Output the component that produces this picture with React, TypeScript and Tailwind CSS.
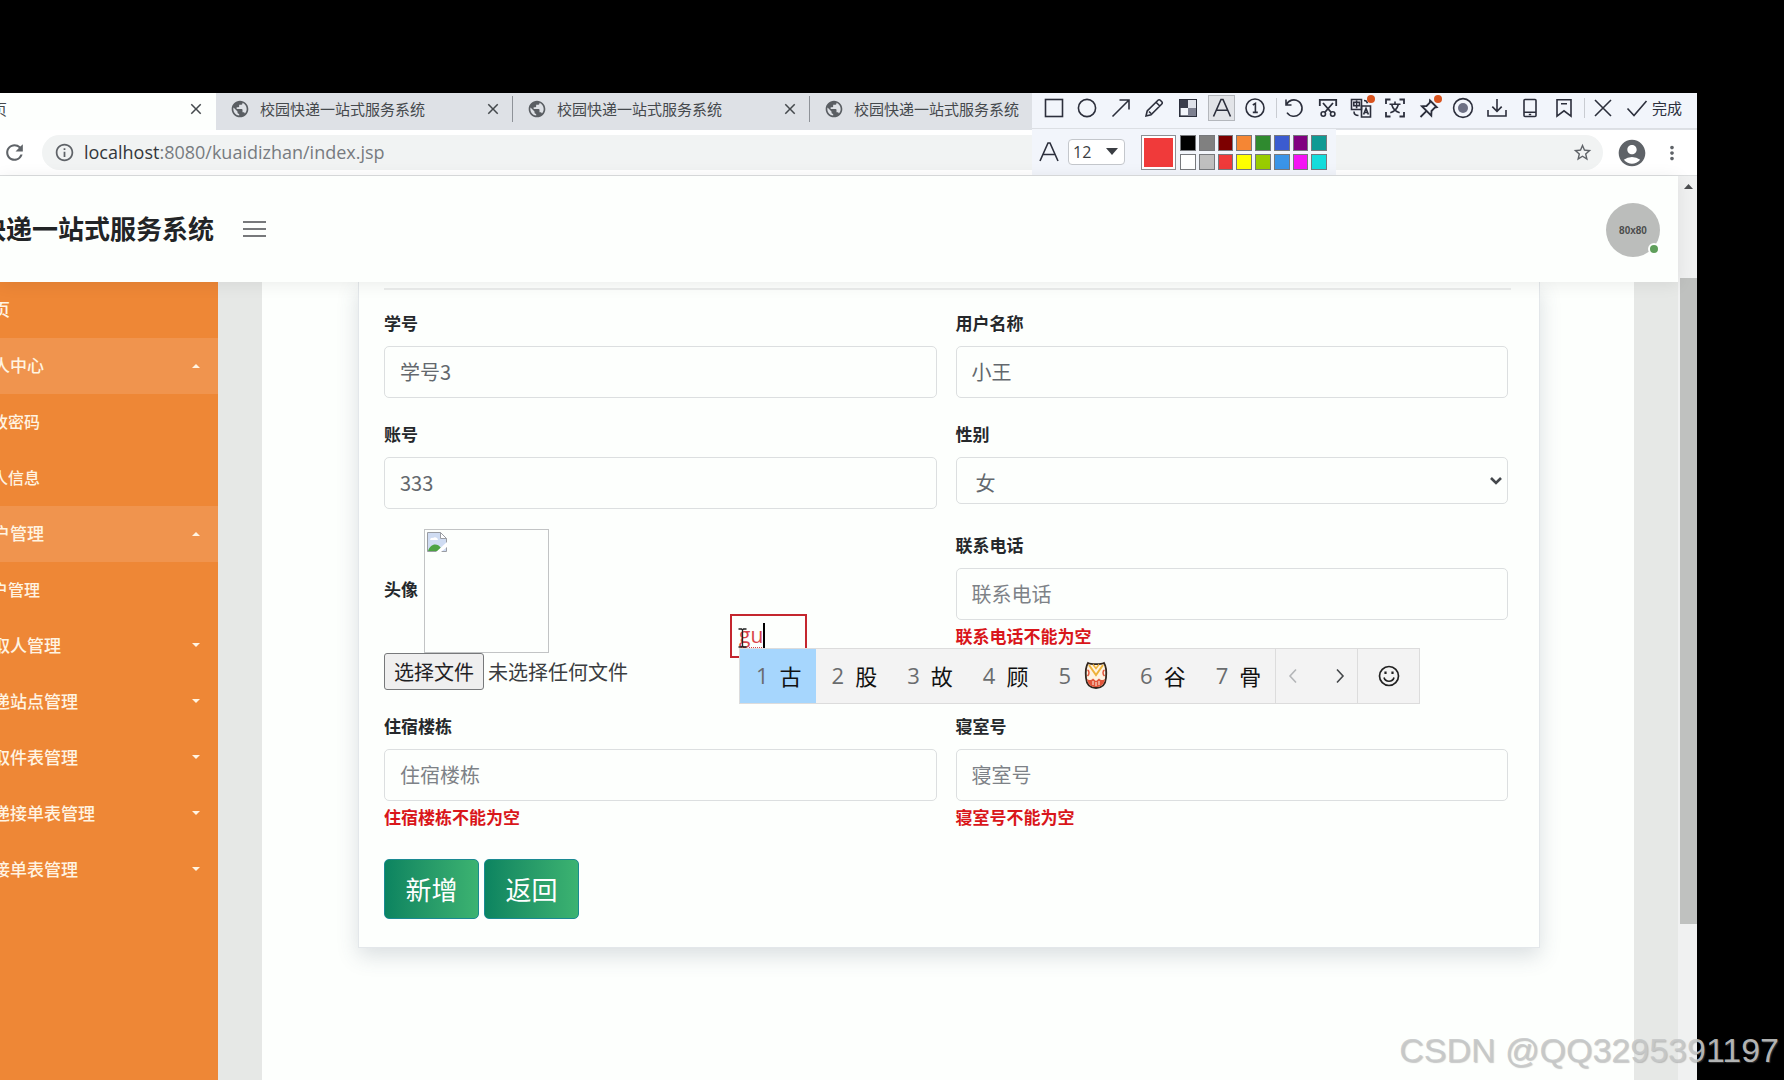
import { useState, type ReactNode } from 'react';
import {
  MdPublic,
  MdClose,
  MdRefresh,
  MdInfoOutline,
  MdStarBorder,
  MdAccountCircle,
  MdMoreVert,
} from 'react-icons/md';

const SYSTEM_NAME = '校园快递一站式服务系统';

type MenuItem = { text: string; open?: boolean; sub?: boolean; link?: boolean };

const MENU: MenuItem[] = [
  { text: '首页', link: true },
  { text: '个人中心', open: true },
  { text: '修改密码', sub: true },
  { text: '个人信息', sub: true },
  { text: '用户管理', open: true },
  { text: '用户管理', sub: true },
  { text: '代取人管理' },
  { text: '快递站点管理' },
  { text: '代取件表管理' },
  { text: '快递接单表管理' },
  { text: '代接单表管理' },
];

const COLORS = [
  'bg-black', 'bg-[#808080]', 'bg-[#7d0000]', 'bg-[#f58634]',
  'bg-[#2f8a2f]', 'bg-[#3b5bd0]', 'bg-[#800080]', 'bg-[#0f9a94]',
  'bg-white', 'bg-[#bfbfbf]', 'bg-[#f03a3a]', 'bg-[#ffff00]',
  'bg-[#99cc00]', 'bg-[#3a94e8]', 'bg-[#f414f4]', 'bg-[#14dcdc]',
];

function Icon({ children }: { children: ReactNode }) {
  return (
    <svg viewBox="0 0 22 22" className="w-[22px] h-[22px]" fill="none" stroke="currentColor" strokeWidth="1.6">
      {children}
    </svg>
  );
}

const DRAW_TOOLS: { name: string; icon: ReactNode }[] = [
  { name: '矩形', icon: <Icon><rect x="2.5" y="2.5" width="17" height="17" /></Icon> },
  { name: '椭圆', icon: <Icon><circle cx="11" cy="11" r="8.6" /></Icon> },
  { name: '箭头', icon: <Icon><path d="M2.5 19.5 19 3M9.5 3H19v9.5" /></Icon> },
  {
    name: '画笔',
    icon: <Icon><path d="m3 19 1.2-5L15 3.2a1.6 1.6 0 0 1 2.3 0l1.5 1.5a1.6 1.6 0 0 1 0 2.3L8 17.8 3 19ZM13 5.2l3.8 3.8M6 14.5l2 2" /></Icon>,
  },
  {
    name: '马赛克',
    icon: (
      <Icon>
        <rect x="2.8" y="2.8" width="16.4" height="16.4" />
        <path d="M3 3h8v8H3z" fill="#3a3d4c" stroke="none" />
        <path d="M11 11h8v8h-8z" fill="#7d8090" stroke="none" />
        <path d="M11 3h8v8h-8z" fill="#dfe2ea" stroke="none" />
      </Icon>
    ),
  },
  { name: '文字', icon: <Icon><path d="M2.5 19.5 10 2.5h2l7.5 17M5.4 13.3h11.2" /></Icon> },
  {
    name: '序号',
    icon: <Icon><circle cx="11" cy="11" r="9" /><path d="M8.8 8 11.4 6.4v9M8.8 15.4h5" /></Icon>,
  },
];

const ACTION_TOOLS: { name: string; dot?: boolean; icon: ReactNode }[] = [
  { name: '撤销', icon: <Icon><path d="M3 2.5V8h5.5M3.4 7.6A8.2 8.2 0 1 1 4 15.6" /></Icon> },
  {
    name: '剪切',
    icon: (
      <Icon>
        <path d="M2.8 9V2.8h16.4V9M6 6l8.3 9.5M16 6l-8.3 9.5" strokeWidth="1.8" />
        <circle cx="6.3" cy="17" r="2.2" />
        <circle cx="15.7" cy="17" r="2.2" />
      </Icon>
    ),
  },
  {
    name: '翻译',
    dot: true,
    icon: (
      <Icon>
        <path d="M1.5 2.5h10v10h-10zM3.8 5.3h5.6v3.4H3.8zM6.6 3.6v7.6" />
        <path d="M11.5 9h9v11h-9zM13.6 17.5l2.4-6 2.4 6M14.4 15.5h3.2M4 14.5c0 2.4 1.6 4 4.5 4M14 3.5c1.8 0 3 .8 3.5 2.8" />
      </Icon>
    ),
  },
  {
    name: '识别文字',
    icon: (
      <Icon>
        <path d="M2 7V2.5h4.5M15.5 2.5H20V7M20 15v4.5h-4.5M6.5 19.5H2V15" strokeWidth="1.8" />
        <path d="M11 4.5v2.6M5.5 7.3h11M14.3 7.5c-1 4-4 7-8 8.3M7.7 7.5c1 4 4 7 8 8.3" />
      </Icon>
    ),
  },
  {
    name: '钉住',
    dot: true,
    icon: <Icon><path d="m12 3.5 6.8 6.8-2 .4-3.3 3.3-.2 4.6L3.9 9.2l4.6-.2 3.3-3.3.2-2.2ZM8.6 13.9 2.5 20" strokeWidth="1.8" /></Icon>,
  },
  {
    name: '录制',
    icon: <Icon><circle cx="11" cy="11" r="9.4" /><circle cx="11" cy="11" r="5" fill="#6d7084" stroke="none" /></Icon>,
  },
  { name: '下载', icon: <Icon><path d="M11 2v12M6.3 9.6 11 14.3l4.7-4.7M2 13v6h18v-6" /></Icon> },
  {
    name: '发送到手机',
    icon: <Icon><rect x="5" y="2.5" width="12" height="17" rx="1" /><path d="M5 15.2h12M9.8 17.5h2.4" /></Icon>,
  },
  { name: '收藏', icon: <Icon><path d="M4 2.8h14v16.4l-7-5.4-7 5.4zM8 6.8h6" /></Icon> },
];

function TextGlyph() {
  return (
    <svg viewBox="0 0 22 22" className="w-[22px] h-[22px]" fill="none" stroke="#2c2f3c" strokeWidth="1.6">
      <path d="M2 20 10 2h2l8 18M5 13.5h12" />
    </svg>
  );
}

// Screenshot tool that floats over the browser's top right corner
function CaptureToolbar() {
  return (
    <div className="absolute top-0 right-0 w-[665px] text-[#2c2f3c]">
      <div className="flex items-center h-[36px] pl-[5px] pb-1.5 bg-[#f2f5fb] border-b border-[#dcdfe4]">
        <div className="grid grid-cols-7 w-[235px] shrink-0">
          {DRAW_TOOLS.map(t => (
            <button
              key={t.name}
              type="button"
              aria-label={t.name}
              className={`flex items-center justify-center justify-self-center w-[27px] h-[26px] ${t.name === '文字' ? 'bg-[#e2e4e8] border border-[#b4b7bc]' : ''}`}
            >
              {t.icon}
            </button>
          ))}
        </div>
        <div className="w-px h-5 ml-1 bg-[#c9ccd2]" />
        <div className="grid grid-cols-9 w-[304px] shrink-0">
          {ACTION_TOOLS.map(t => (
            <button
              key={t.name}
              type="button"
              aria-label={t.name}
              className="relative flex items-center justify-center justify-self-center w-[27px] h-[26px]"
            >
              {t.icon}
              {t.dot && <span className="absolute top-0 right-0 w-2 h-2 rounded-full bg-[#d9531e]" />}
            </button>
          ))}
        </div>
        <div className="w-px h-5 ml-[3px] bg-[#c9ccd2]" />
        <button type="button" aria-label="关闭" className="ml-[7px]">
          <Icon><path d="m3 3 16 16M19 3 3 19" /></Icon>
        </button>
        <button type="button" className="flex items-center gap-1 ml-3 text-[15px] leading-5 whitespace-nowrap">
          <Icon><path d="m1.5 11.5 6.5 7L20.5 4" /></Icon>
          完成
        </button>
      </div>

      <div className="flex items-center w-[304px] h-[46px] pl-1.5 bg-[#f2f5fb]">
        <TextGlyph />
        <div className="relative ml-2">
          <select
            aria-label="字号"
            defaultValue="12"
            className="appearance-none w-[57px] h-[26px] pl-1 bg-white border border-[#c4c7cc] rounded-sm font-['Open_Sans'] text-base leading-6 text-[#3a3d42]"
          >
            <option>12</option>
            <option>14</option>
          </select>
          <svg viewBox="0 0 12 7" className="absolute right-[7px] top-[9px] w-3 h-[7px] pointer-events-none">
            <path d="M0 0h12L6 7z" fill="#3a3d42" />
          </svg>
        </div>
        <div className="w-[35px] h-[35px] ml-4 p-0.5 border border-[#8d8f94] bg-white">
          <div className="w-full h-full bg-[#f03a3a]" />
        </div>
        <div className="grid grid-cols-8 gap-[3px] w-[147px] ml-1">
          {COLORS.map(c => (
            <button key={c} type="button" aria-label="颜色" className={`h-4 border border-[#77797d] ${c}`} />
          ))}
        </div>
      </div>
    </div>
  );
}

function BrowserChrome() {
  return (
    <div className="relative shrink-0 bg-white">
      <div className="flex h-[37px] bg-[#dee1e6] overflow-hidden text-[15px] text-[#45494d]">
        <div className="flex items-center justify-between w-[216px] shrink-0 pr-[11px] pb-[5px] bg-[#fdfffd]">
          <span className="-ml-[23px]">首页</span>
          <MdClose className="w-[18px] h-[18px] stroke-current" />
        </div>
        {[0, 1, 2].map(i => (
          <div key={i} className="flex items-center w-[297px] shrink-0 pl-[14px] pb-[5px]">
            <MdPublic className="w-5 h-5 text-[#5a5e63]" />
            <span className="ml-[10px] whitespace-nowrap">{SYSTEM_NAME}</span>
            <MdClose className="w-[18px] h-[18px] ml-auto mr-[10px] stroke-current" />
            <span className="w-px h-[26px] bg-[#8e9298]" />
          </div>
        ))}
      </div>
      <div className="flex items-center h-[46px] pl-0.5 pr-[14px] border-b border-[#dcdedf] text-[#5f6368]">
        <MdRefresh className="w-[25px] h-[25px] shrink-0" />
        <div className="flex items-center flex-1 h-[35px] ml-[15px] pl-3 pr-[10px] rounded-full bg-[#f1f3f3]">
          <MdInfoOutline className="w-[21px] h-[21px]" />
          <span className="ml-[9px] pb-0.5 font-['Open_Sans'] text-lg leading-6 text-[#777b80]">
            <span className="text-[#33373b]">localhost</span>:8080/kuaidizhan/index.jsp
          </span>
          <MdStarBorder className="w-[21px] h-[21px] ml-auto" />
        </div>
        <MdAccountCircle className="w-8 h-8 ml-[13px]" />
        <MdMoreVert className="w-[22px] h-[22px] ml-[13px]" />
      </div>
      <CaptureToolbar />
    </div>
  );
}

function Sidebar() {
  return (
    <nav className="w-[218px] shrink-0 bg-[#ee8736] overflow-hidden shadow-[2px_0_10px_rgba(0,0,0,0.12)]">
      {MENU.map((item, i) => (
        <a
          key={i}
          href="#"
          className={`flex items-center justify-between h-14 pb-0.5 pr-[17px] font-medium text-[#fff4e2] ${item.open ? 'bg-[#f0944e]' : ''} ${item.sub ? 'text-base' : 'text-[17px]'}`}
        >
          <span className="-ml-[24px] whitespace-nowrap">{item.text}</span>
          {!item.sub && !item.link && (
            <svg viewBox="0 0 10 5" className="w-[10px] h-[5px]">
              <path d={item.open ? 'M1 5h8L5 1z' : 'M1 0h8L5 4z'} fill="#fff4e2" />
            </svg>
          )}
        </a>
      ))}
    </nav>
  );
}

type FieldProps = {
  id: string;
  label: string;
  value?: string;
  error?: string;
};

function Field({ id, label, value = '', error }: FieldProps) {
  const [text, setText] = useState(value);

  return (
    <div>
      <label htmlFor={id} className="block pt-1 mb-[11px] text-[17px] leading-6 font-bold text-[#25282b]">
        {label}
      </label>
      <input
        id={id}
        type="text"
        value={text}
        placeholder={label}
        onChange={e => setText(e.target.value)}
        className="block w-full h-[52px] px-[15px] pb-0.5 border border-[#dcdfe0] rounded-[5px] bg-transparent text-xl text-[#63686d] placeholder:text-[#7d8287] outline-none"
      />
      {error && <p className="mt-1 text-[17px] leading-6 font-bold text-[#d9161a]">{error}</p>}
    </div>
  );
}

function AvatarField() {
  return (
    <div>
      <div className="flex items-center gap-[6px] text-[17px] font-bold text-[#25282b]">
        <label htmlFor="avatar" className="pb-1">头像</label>
        {/* Picture that failed to load */}
        <div className="w-[125px] h-[124px] p-0.5 border border-[#c2c4c5]">
          <svg viewBox="0 0 20 20" className="w-5 h-5">
            <path d="M.5.5h13l6 6v13H.5z" fill="#cfdcf2" stroke="#9a9da3" />
            <path d="M13.5.5v6h6z" fill="#fff" stroke="#9a9da3" />
            <path d="M3 8a2.4 2.4 0 0 1 3-2 3 3 0 0 1 5 2z" fill="#fff" />
            <path d="M1 19c2-7 9-9 13-3l-3 3z" fill="#4da343" />
            <path d="M20 10 9 20h5l6-5z" fill="#fff" />
          </svg>
        </div>
      </div>
      <div className="flex items-center text-xl text-[#3a3d40]">
        <input id="avatar" type="file" className="sr-only" />
        <label
          htmlFor="avatar"
          className="w-[100px] h-[37px] leading-[35px] text-center bg-[#efefef] border border-[#77797b] rounded-[3px] text-[#1f2123]"
        >
          选择文件
        </label>
        <span className="ml-1">未选择任何文件</span>
      </div>
    </div>
  );
}

function GenderField() {
  return (
    <div>
      <label htmlFor="gender" className="block pt-1 mb-[11px] text-[17px] leading-6 font-bold text-[#25282b]">
        性别
      </label>
      <div className="relative">
        <select
          id="gender"
          defaultValue="女"
          className="appearance-none block w-full h-[47px] px-[19px] pt-1 border border-[#dcdfe0] rounded-[5px] bg-transparent text-xl leading-7 text-[#63686d] outline-none"
        >
          <option>女</option>
          <option>男</option>
        </select>
        <svg viewBox="0 0 12 8" className="absolute right-[6px] top-5 w-3 h-2 pointer-events-none" fill="none" stroke="#44484c" strokeWidth="2.6">
          <path d="m1 1 5 5 5-5" />
        </svg>
      </div>
    </div>
  );
}

const drumIcon = (
  <svg viewBox="0 0 24 28" className="w-7 h-7">
    <path d="M4 2c3 1.500 13 1.500 16 0 2 3 2.500 10 2 15-.5 6-4 10-10 10S2.500 23 2 17C1.500 12 2 5 4 2z" fill="#fff3e2" stroke="#33271f" strokeWidth="1.8" />
    <path d="M3 18c2 2 4.500 1 6-.5l3 2.500 3-2.500c1.500 1.500 4 2.500 6 .5-.8 5.500-4 8-9 8s-8.200-2.500-9-8z" fill="#e2553a" />
    <path d="M9 20v4M12 21v4M15 20v4" stroke="#fff3e2" />
    <path d="m5 4 7 10 7-10" fill="none" stroke="#eeb23a" strokeWidth="2" />
    <path d="m9 3.500 3 4 3-4" fill="none" stroke="#eeb23a" strokeWidth="1.500" />
    <path d="M3.500 9c2 1 2 4 0 6M20.500 9c-2 1-2 4 0 6" fill="none" stroke="#e2553a" strokeWidth="1.500" />
  </svg>
);

const CANDIDATES: ReactNode[] = ['古', '股', '故', '顾', drumIcon, '谷', '骨'];

// Text note being typed, with the input method's candidates below it
function TypingOverlay() {
  return (
    <div className="absolute left-[730px] top-[332px]">
      <div className="relative flex w-[77px] h-[44px] pl-[7px] pt-[7px] border-[2px] border-[#c4262e]">
        <span className="h-[26px] border-r-2 border-black font-['Open_Sans'] text-[21px] leading-6 text-[#d8444a] underline decoration-dotted decoration-1 underline-offset-4">
          gu
        </span>
        <svg viewBox="0 0 9 20" className="absolute left-[6px] top-3 w-[9px] h-5" fill="none" stroke="#222" strokeWidth="1.3">
          <path d="M.5 1h3l1 1 1-1h3M4.500 2v16M.5 19h3l1-1 1 1h3" />
        </svg>
      </div>
      <div className="absolute left-[9px] top-[34px] flex h-[56px] bg-[#f3f3f3] border border-[#dcdcdc] text-[22px] leading-8 text-[#111]">
        {CANDIDATES.map((c, i) => (
          <button
            key={i}
            type="button"
            className={`flex items-center gap-[11px] h-full pl-[16px] pr-[14px] pb-[3px] ${i === 0 ? 'bg-[#a6d6fd]' : ''}`}
          >
            <span className="font-['Open_Sans'] text-[#6a6c6e]">{i + 1}</span>
            {c}
          </button>
        ))}
        <div className="flex items-center justify-between w-[82px] px-3 border-l border-[#dcdcdc]">
          <button type="button" aria-label="上一页">
            <svg viewBox="0 0 10 16" className="w-[10px] h-4" fill="none" stroke="#b4b6b8" strokeWidth="1.6"><path d="M8 1.500 2 8l6 6.500" /></svg>
          </button>
          <button type="button" aria-label="下一页">
            <svg viewBox="0 0 10 16" className="w-[10px] h-4" fill="none" stroke="#44474a" strokeWidth="1.6"><path d="m2 1.500 6 6.500-6 6.500" /></svg>
          </button>
        </div>
        <button type="button" aria-label="表情" className="flex items-center justify-center w-[62px] border-l border-[#dcdcdc]">
          <svg viewBox="0 0 22 22" className="w-[22px] h-[22px]" fill="none" stroke="#222" strokeWidth="1.7">
            <circle cx="11" cy="11" r="9.500" />
            <path d="M6 12.500c1.500 5 8.500 5 10 0" />
            <path d="M7.500 6.500v2.400M14.500 6.500v2.400" strokeWidth="2.200" />
          </svg>
        </button>
      </div>
    </div>
  );
}

function App() {
  return (
    <div className="relative flex flex-col h-screen pt-[93px] pr-[87px] bg-black overflow-hidden font-['Noto_Sans_CJK_SC',sans-serif]">
      <BrowserChrome />

      <div className="flex flex-1 min-h-0 bg-[#fdfffd]">
        <div className="relative flex flex-col flex-1 min-w-0">
          {/* Header */}
          <header className="relative z-10 flex items-center h-[106px] shrink-0 pr-[18px] bg-[#fdfffd] shadow-[0_2px_16px_rgba(0,0,0,0.08)]">
            <h1 className="-ml-[72px] pb-0.5 text-[26px] leading-9 font-bold whitespace-nowrap text-[#222426]">{SYSTEM_NAME}</h1>
            <button type="button" aria-label="菜单" className="flex flex-col gap-[5px] ml-[29px]">
              <span className="w-[23px] h-0.5 bg-[#77797b]" />
              <span className="w-[23px] h-0.5 bg-[#77797b]" />
              <span className="w-[23px] h-0.5 bg-[#77797b]" />
            </button>
            <div className="relative flex items-center justify-center w-[54px] h-[54px] mt-0.5 ml-auto rounded-full bg-[#bbbdbb] font-['Liberation_Sans'] text-[10px] font-bold text-[#4a4c4b]">
              80x80
              <span className="absolute right-0 bottom-0.5 w-3 h-3 rounded-full bg-[#5f9f5b] border-2 border-[#fdfffd]" />
            </div>
          </header>

          <div className="flex flex-1 min-h-0 overflow-hidden">
            <Sidebar />
            <main className="flex-1 min-w-0 px-11 bg-[#e6e8e6]">
              <div className="h-full pl-24 pr-[94px] bg-[#fdfffd]">
                <form
                  onSubmit={e => e.preventDefault()}
                  className="pt-[6px] pl-[25px] pr-7 pb-7 border border-t-0 border-[#e3e7ea] shadow-[0_8px_20px_rgba(60,75,100,0.18)]"
                >
                  <hr className="border-t-2 border-[#ebedec] mb-[17px]" />
                  <div className="grid grid-cols-2 gap-x-[19px] gap-y-5 mr-[3px]">
                    <Field id="number" label="学号" value="学号3" />
                    <Field id="name" label="用户名称" value="小王" />
                    <Field id="account" label="账号" value="333" />
                    <GenderField />
                    <AvatarField />
                    <Field id="phone" label="联系电话" error="联系电话不能为空" />
                    <Field id="building" label="住宿楼栋" error="住宿楼栋不能为空" />
                    <Field id="room" label="寝室号" error="寝室号不能为空" />
                  </div>
                  <div className="flex gap-[5px] mt-[30px] text-[26px] text-white">
                    <button type="submit" className="w-[95px] h-[60px] pb-0.5 rounded-[5px] border border-[#1a8a92] bg-linear-to-r from-[#0b8460] to-[#3cb371]">新增</button>
                    <button type="button" className="w-[95px] h-[60px] pb-0.5 rounded-[5px] border border-[#1a8a92] bg-linear-to-r from-[#0b8460] to-[#3cb371]">返回</button>
                  </div>
                </form>
              </div>
            </main>
          </div>

          <div className="z-20">
            <div className="absolute left-0 top-[106px]">
              <TypingOverlay />
            </div>
          </div>
        </div>

        {/* Scrollbar */}
        <div className="w-[19px] shrink-0 pl-0.5 pt-2 bg-[#f0f1f1]">
          <svg viewBox="0 0 9 5" className="w-[9px] h-[5px] mx-auto"><path d="M0 5h9L4.500 0z" fill="#4c4e50" /></svg>
          <div className="h-[646px] mt-[89px] bg-[#bfc1bf]" />
        </div>
      </div>

      {/* Watermark */}
      <p className="absolute right-[5px] bottom-3 font-['Liberation_Sans'] text-[34px] leading-9 text-[#c6c8c8]/90 [text-shadow:1px_1px_1px_rgba(120,120,120,0.4)]">
        CSDN @QQ3295391197
      </p>
    </div>
  );
}

export default App;
